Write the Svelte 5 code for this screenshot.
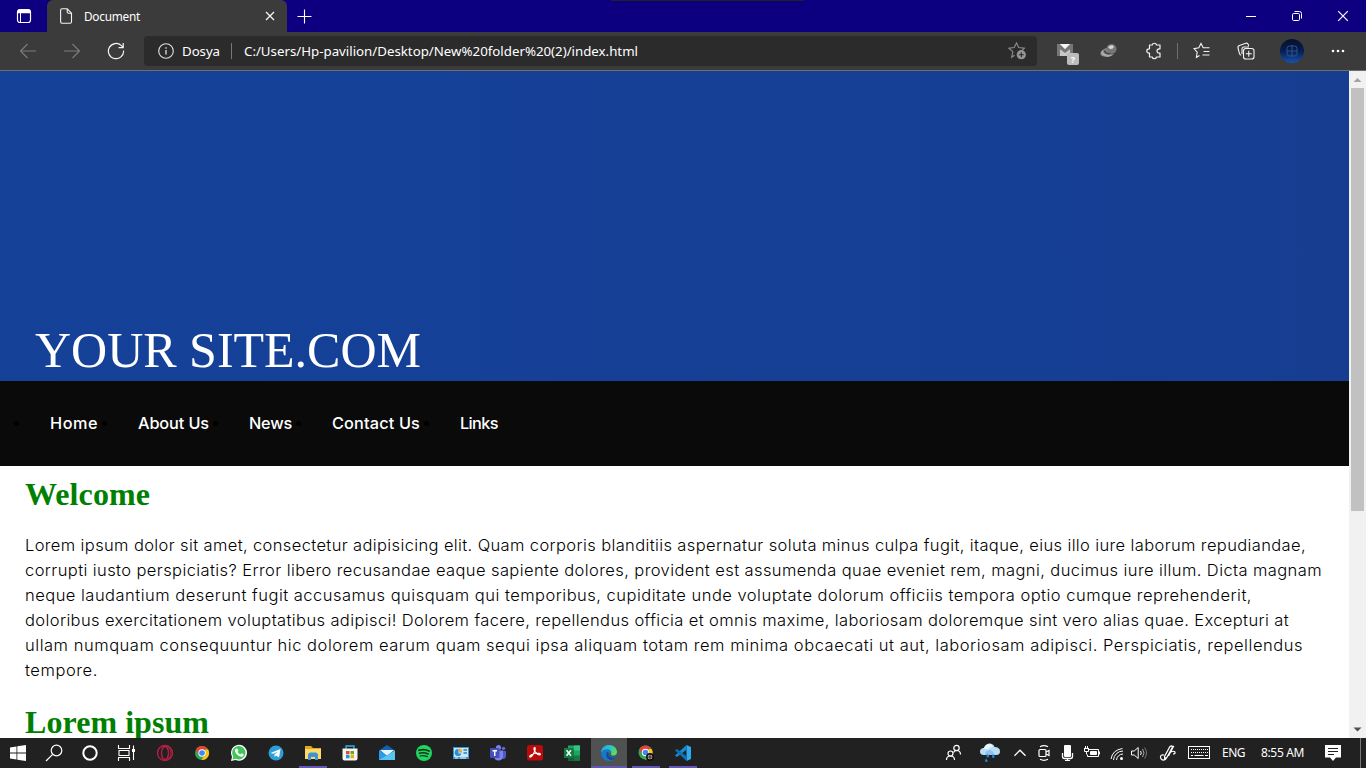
<script>
  // Spreads the letters of a single line so that it spans the given width.
  function fit(node, width) {
    node.style.letterSpacing = '0px';
    const range = document.createRange();
    range.selectNodeContents(node);
    const natural = range.getBoundingClientRect().width;
    const count = node.textContent.length;
    node.style.letterSpacing = (width - natural) / count + 'px';
    node.style.width = width + 'px';
  }

  const links = [
    ['Home', 48], ['About Us', 71], ['News', 43], ['Contact Us', 88], ['Links', 38]
  ];

  const lines = [
    ['Lorem ipsum dolor sit amet, consectetur adipisicing elit. Quam corporis blanditiis aspernatur soluta minus culpa fugit, itaque, eius illo iure laborum repudiandae,', 1281],
    ['corrupti iusto perspiciatis? Error libero recusandae eaque sapiente dolores, provident est assumenda quae eveniet rem, magni, ducimus iure illum. Dicta magnam', 1297],
    ['neque laudantium deserunt fugit accusamus quisquam qui temporibus, cupiditate unde voluptate dolorum officiis tempora optio cumque reprehenderit,', 1227],
    ['doloribus exercitationem voluptatibus adipisci! Dolorem facere, repellendus officia et omnis maxime, laboriosam doloremque sint vero alias quae. Excepturi at', 1264],
    ['ullam numquam consequuntur hic dolorem earum quam sequi ipsa aliquam totam rem minima obcaecati ut aut, laboriosam adipisci. Perspiciatis, repellendus', 1278],
    ['tempore.', 73]
  ];
</script>

<div class="screen">
  <header class="tabs">
    <svg class="menu" width="16" height="16" viewBox="0 0 16 16" fill="none" stroke="#fff"><rect x="1.5" y="1.5" width="13" height="13" rx="2.5" stroke-width="1.2"/><path d="M2 3.5h12" stroke-width="3.5"/><path d="M4.5 5v9" stroke-width="1"/></svg>
    <div class="tab">
      <svg width="14" height="16" viewBox="0 0 14 16" fill="none" stroke="#f4f4f4" stroke-width="1.1"><path d="M1.6 2.2Q1.6.8 3 .8h5.2l4.3 4.4v8.6q0 1.4-1.4 1.4H3q-1.4 0-1.4-1.4zM8.2.8v3q0 1.4 1.4 1.4h2.9"/></svg>
      <span class="title" use:fit={56}>Document</span>
      <svg class="x" width="10" height="10" viewBox="0 0 10 10" stroke="#f4f4f4" stroke-width="1.3"><path d="M1 1l8 8M9 1L1 9"/></svg>
    </div>
    <svg class="plus" width="15" height="15" viewBox="0 0 15 15" stroke="#fff" stroke-width="1.1"><path d="M.5 7.5h14M7.5.5v14"/></svg>
    <div class="edge"></div>
    <div class="win">
      <svg width="12" height="12" viewBox="0 0 12 12" stroke="#fff"><path d="M1 6.5h10"/></svg>
      <svg width="12" height="12" viewBox="0 0 12 12" fill="none" stroke="#fff"><rect x="1.5" y="3.5" width="7" height="7" rx="1.2"/><path d="M3.5 1.5h5q2 0 2 2v5"/></svg>
      <svg width="12" height="12" viewBox="0 0 12 12" stroke="#fff" stroke-width="1.2"><path d="M1.2 1.2l9.6 9.6M10.8 1.2l-9.6 9.6"/></svg>
    </div>
  </header>

  <div class="toolbar">
    <div class="travel">
      <svg width="18" height="16" viewBox="0 0 18 16" fill="none" stroke="#7c7c7c" stroke-width="1.1"><path d="M17 8H1.5M8.5 1l-7 7 7 7"/></svg>
      <svg width="18" height="16" viewBox="0 0 18 16" fill="none" stroke="#7c7c7c" stroke-width="1.1"><path d="M1 8h15.5M9.5 1l7 7-7 7"/></svg>
      <svg width="18" height="18" viewBox="0 0 18 18" fill="none" stroke="#f4f4f4" stroke-width="1.2"><path d="M16.6 8.6A7.6 7.6 0 1 1 14.4 3.7L16 5.3M16.2 1v4.6h-4.6"/></svg>
    </div>
    <div class="address">
      <svg width="16" height="16" viewBox="0 0 16 16" fill="none" stroke="#e2e2e2" stroke-width="1.1"><circle cx="8" cy="8" r="7.3"/><path d="M8 7v4.5M8 4.3v1.4" stroke-width="1.3"/></svg>
      <span class="scheme" use:fit={38}>Dosya</span>
      <i></i>
      <span class="url" use:fit={394}>C:/Users/Hp-pavilion/Desktop/New%20folder%20(2)/index.html</span>
      <svg class="fav" width="19" height="18" viewBox="0 0 19 18" fill="none" stroke="#8f8f8f" stroke-width="1.1"><path d="M6.5 13.2l-2.8 2 1.2-5.5L.8 6.2l5.4-.6L8.5 1l2.3 4.6 5.6.6-2 2"/><circle cx="13.3" cy="12.7" r="4.6" fill="#969696" stroke="none"/><path d="M10.8 12.7h5M13.3 10.2v5" stroke="#2b2b2b"/></svg>
    </div>
    <div class="tools">
      <svg class="mail" width="24" height="24" viewBox="0 0 24 24"><path d="M2 4h16v12H2z" fill="#777"/><path d="M5 4h10v12H5z" fill="#c8c8c8"/><path d="M2 4h3l5 5 5-5h3v3l-8 6-8-6z" fill="#777"/><path d="M5 4h10l-5 5z" fill="#f5f5f5"/><rect x="12" y="13" width="12" height="12" rx="2" fill="#bcbcbc"/><text x="18" y="22.5" text-anchor="middle" font-size="9" font-weight="700" fill="#fff">?</text></svg>
      <svg width="20" height="18" viewBox="0 0 20 18"><ellipse cx="8" cy="10" rx="7" ry="4" transform="rotate(-22 8 10)" fill="#858585"/><circle cx="12.500" cy="7" r="5" fill="#777"/><path d="M9 5a4 4 0 0 1 6-.5q-1 3-4 2.500z" fill="#d5d5d5"/><path d="M4 8q-1 6 11 4Q10 17 4 13.500 0 11 4 8z" fill="#aaa"/><path d="M5.500 8.500q1 4 6 3" stroke="#484848" stroke-width="1.500" fill="none"/></svg>
      <svg width="18" height="18" viewBox="0 0 18 18" fill="none" stroke="#f4f4f4" stroke-width="1.200" stroke-linejoin="round"><path d="M4.500 3h2.700a2.200 2.200 0 0 1 4.300 0h3.500v3.800h-.8a2.200 2.200 0 0 0 0 4.400h.8V15h-3.500a2.200 2.200 0 0 1-4.300 0H4.500v-3.800H4a2.200 2.200 0 0 1 0-4.400h.5z"/></svg>
      <i></i>
      <svg width="18" height="18" viewBox="0 0 18 18" fill="none" stroke="#f4f4f4" stroke-width="1.1"><path d="M6.500 13.500l-3.100 2 .8-5.300L1 6.600l4.800-.8L8 1.400l2.200 4.400h6.300M10.500 9.500h6M9.500 13h7"/></svg>
      <svg width="18" height="18" viewBox="0 0 18 18" fill="none" stroke="#f4f4f4" stroke-width="1.1"><rect x="6.500" y="6.500" width="10.500" height="10.500" rx="2.300"/><path d="M11.750 8.800v6M8.800 11.750h6M4.200 13.200Q2.800 13 2.400 11.400L1 6Q.6 4.100 2.400 3.600L8.800 1.200q1.800-.5 2.400 1.200l.5 1.600M5 12V7q0-2 2-2h5"/></svg>
      <svg width="24" height="24" viewBox="0 0 24 24"><defs><linearGradient id="av" x1="0" y1="0" x2="0" y2="1"><stop offset="0" stop-color="#071028"/><stop offset=".5" stop-color="#061d52"/><stop offset="1" stop-color="#1653b0"/></linearGradient></defs><circle cx="12" cy="12" r="12" fill="url(#av)"/><rect x="7" y="7" width="10" height="10" rx="2.500" fill="none" stroke="#345385"/><path d="M12 6v11M7 12h10" stroke="#345385"/></svg>
      <svg width="14" height="4" viewBox="0 0 14 4" fill="#fff"><circle cx="2" cy="2" r="1.300"/><circle cx="7" cy="2" r="1.300"/><circle cx="12" cy="2" r="1.300"/></svg>
    </div>
  </div>

  <div class="view">
    <main>
      <div class="banner"><span use:fit={386}>YOUR SITE.COM</span></div>
      <nav>
        {#each links as [label, width]}
          <a href="#top"><b></b><span use:fit={width}>{label}</span></a>
        {/each}
      </nav>
      <section>
        <h1><span use:fit={125}>Welcome</span></h1>
        <div class="para">
          {#each lines as [text, width]}
            <p use:fit={width}>{text}</p>
          {/each}
        </div>
        <h1 class="second"><span use:fit={184}>Lorem ipsum</span></h1>
      </section>
    </main>
    <aside>
      <svg width="17" height="17" viewBox="0 0 17 17"><path d="M4.500 11L8.500 7l4 4z" fill="#a3a3a3"/></svg>
      <div class="thumb"></div>
      <svg width="17" height="17" viewBox="0 0 17 17"><path d="M4.500 6.500h8l-4 4z" fill="#505050"/></svg>
    </aside>
  </div>

  <footer>
    <div class="system">
      <svg viewBox="0 0 20 20" fill="#fff"><path d="M2 4.400l6.500-.9v6H2zM9.300 3.300L18 2v7.500H9.300zM2 10.400h6.500v6.100L2 15.600zM9.300 10.400H18V18l-8.700-1.200z"/></svg>
      <svg viewBox="0 0 20 20" fill="none" stroke="#fff" stroke-width="1.200"><circle cx="12.500" cy="7.500" r="5.300"/><path d="M8.700 11.300L2 18"/></svg>
      <svg viewBox="0 0 20 20" fill="none" stroke="#fff" stroke-width="2"><circle cx="10" cy="10" r="6.700"/></svg>
      <svg viewBox="0 0 20 20" fill="none" stroke="#fff" stroke-width="1.100"><path d="M2.500 2v3.500h11V2M2.500 18v-3.500h11V18M3 7.500h10v5H3zM17.500 2.500v14.500"/><path d="M16 6h3v3h-3z" fill="#fff" stroke="none"/></svg>
    </div>
    <div class="apps">
      <div><svg viewBox="0 0 20 20" fill="none" stroke="#b51f42"><circle cx="10" cy="10" r="7.500" stroke-width="1.400"/><ellipse cx="10" cy="10" rx="3.500" ry="6.500" stroke-width="1.400"/><path d="M12 3.500q4 2 4 6.500t-4 6.500"/></svg></div>
      <div><svg viewBox="0 0 20 20"><circle cx="10" cy="10" r="7" fill="#31a753"/><path d="M3.900 6.500A7 7 0 0 1 16.100 6.500H10L6.800 12z" fill="#e94235"/><path d="M16.100 6.500A7 7 0 0 1 9.500 17l3.600-5.400L13.200 6.500z" fill="#fbc116"/><circle cx="10" cy="10" r="3.700" fill="#fff"/><circle cx="10" cy="10" r="2.800" fill="#4285f4"/></svg></div>
      <div><svg viewBox="0 0 20 20"><path d="M2 18l1-4.300A8 8 0 1 1 6.500 17z" fill="#fff"/><path d="M3.500 16.500l.8-3A6.700 6.700 0 1 1 7 15.800z" fill="#3fc55b"/><path d="M6.500 6q1.500-1.500 2.500.7l.4 1-.9 1.100q1 2 2.900 2.700l1.200-1.200 2.200 1.100q0 2.400-2.200 2.400Q8 13 6 8.500q-.4-1.500.5-2.500z" fill="#fff"/></svg></div>
      <div><svg viewBox="0 0 20 20"><circle cx="10" cy="10" r="7.500" fill="#2c9fd8"/><path d="M4.500 10L14.500 6l-1.500 8.500-3-2-1.500 1.500v-2.600l3.500-3-4.500 2.400z" fill="#fff"/></svg></div>
      <div class="open"><svg viewBox="0 0 20 20"><path d="M2 3h6l2 2h8v5H2z" fill="#e7a61d"/><path d="M2 6h16v10H2z" fill="#ffda6b"/><path d="M5 17v-6l2-1.500h6l2 1.500v6h-3v-3H8v3z" fill="#3e94d7"/></svg></div>
      <div><svg viewBox="0 0 20 20"><path d="M6 6V3h8v3" fill="none" stroke="#29b5eb" stroke-width="1.300"/><path d="M2.500 5.500h15v10q0 2-2 2h-11q-2 0-2-2z" fill="#f4f4f4"/><path d="M6 8h3.500v3.300H6z" fill="#e64a25"/><path d="M10.500 8H14v3.300h-3.500z" fill="#69a920"/><path d="M6 12h3.500v3.300H6z" fill="#1b96dc"/><path d="M10.500 12H14v3.300h-3.500z" fill="#f4ac0a"/></svg></div>
      <div><svg viewBox="0 0 20 20"><path d="M2 7.500L10 2l8 5.500V17H2z" fill="#1161b0"/><path d="M3 7h14l-7 6z" fill="#e8f5fb"/><path d="M2 7.500l8 5 8-5V17H2z" fill="#2b9be8"/><path d="M2 17L18 7.500V17z" fill="#59c4ef"/></svg></div>
      <div><svg viewBox="0 0 20 20" fill="none" stroke="#17351f" stroke-linecap="round"><circle cx="10" cy="10" r="8" fill="#1ed760" stroke="none"/><path d="M5 7.200q5.500-1.500 10 .8" stroke-width="1.900"/><path d="M5.500 10.200q4.500-1.300 8.700.8" stroke-width="1.600"/><path d="M6 13q3.800-1.100 7.300.7" stroke-width="1.300"/></svg></div>
      <div><svg viewBox="0 0 20 20"><path d="M2 4h16v12H2z" fill="#3c92cc"/><path d="M3 5h14v9H3z" fill="#c4e8fa"/><path d="M7.500 6a3.500 3.500 0 1 0 3 4.500h-3z" fill="#258fd0"/><path d="M8 5.500a3.500 3.500 0 0 1 3 4H8z" fill="#f2a820"/><path d="M12.500 7H16M12.500 10H16" stroke="#277dbc" stroke-width="1.300"/><path d="M4 15h3M9 15h6" stroke="#e8fbff"/></svg></div>
      <div><svg viewBox="0 0 20 20"><circle cx="15.500" cy="5.500" r="1.800" fill="#5b65ce"/><circle cx="10.500" cy="4.500" r="2.500" fill="#7b83eb"/><path d="M13 8h5v5q0 3-3 3h-2z" fill="#5059c9"/><path d="M6 7.500h9v6q-.5 4-4.500 4T6 13.500z" fill="#7b83eb"/><rect x="2" y="5" width="9.500" height="10" rx="1" fill="#464eb8"/><path d="M4.500 7.700H9M6.750 7.700v5.300" stroke="#fff" stroke-width="1.400"/></svg></div>
      <div><svg viewBox="0 0 20 20"><rect x="2" y="2" width="16" height="15.500" rx="2.500" fill="#b90b0b"/><path d="M5 14q-1-.5 1.500-2.200 3-1.800 7.700-1.500 2 .6.800 1.600-2.500.2-5-3.200-1.500-2.500-.9-3.800.8-.9 1.100.7.200 2.200-3 7Q5.700 14.500 5 14z" fill="none" stroke="#fff" stroke-width="1.200"/></svg></div>
      <div><svg viewBox="0 0 20 20"><path d="M6 2.500h12v15H6z" fill="#21a366"/><path d="M12 2.500h6v5h-6z" fill="#33c481"/><path d="M6 7.500h6v5H6zM12 12.500h6v5h-6z" fill="#107c41"/><path d="M6 12.500h6v5H6z" fill="#185c37"/><path d="M2 5h9.500v10H2z" fill="#107c41"/><path d="M4.500 7.200l4.500 5.500M9 7.200l-4.500 5.500" stroke="#fff" stroke-width="1.500"/></svg></div>
      <div class="open active"><svg viewBox="0 0 20 20"><defs><linearGradient id="eg" x1="0" y1="0" x2="1" y2=".5"><stop stop-color="#1da4de"/><stop offset=".6" stop-color="#31c6c0"/><stop offset="1" stop-color="#63db4c"/></linearGradient></defs><circle cx="10" cy="10" r="8" fill="#1578cb"/><path d="M2 9.500C2.500 4.500 6 2 10 2c5 0 8 3.500 8 7 0 3-3 4.500-6 3.500-1-.5-.5-1 .2-2C13 7.500 10 6 7.500 6.300 5 6.500 3 8 2 9.500z" fill="url(#eg)"/><path d="M8 9q-2.500 5 3 8 4 .5 6-3-4 1.500-6.500-.5Q8.700 12 9.500 9.500z" fill="#114b91"/><path d="M9.800 9.500q-1.300 3 1.900 4.200 3 1 5.800-.4l1.500-1.800-2.500.7q-3 1-4.500.1-.5-.4.300-1.500z" fill="#505252"/></svg></div>
      <div class="open"><svg viewBox="0 0 20 20"><circle cx="9.500" cy="9.500" r="7" fill="#31a753"/><path d="M3.400 6A7 7 0 0 1 15.600 6h-6l-3.200 5.500z" fill="#e94235"/><path d="M15.600 6A7 7 0 0 1 9 16.500l3.600-5.400V6z" fill="#fbc116"/><circle cx="9.500" cy="9.500" r="3.700" fill="#fff"/><circle cx="9.500" cy="9.500" r="2.800" fill="#4285f4"/><circle cx="14" cy="14" r="4" fill="#111"/><circle cx="14" cy="14" r="2.300" fill="#ddd" /><circle cx="14" cy="14" r="1.700" fill="#222"/><circle cx="14" cy="14" r=".8" fill="#e04b4b"/></svg></div>
      <div class="open"><svg viewBox="0 0 20 20"><path d="M13.500 2L18 4v12l-4.500 2z" fill="#2cacf2"/><path d="M13.500 2v4.700L4 14l-2-1.500z" fill="#168ad2"/><path d="M2 7.300L4 6l9.500 7.200V18z" fill="#0b73b7"/></svg></div>
    </div>
    <div class="tray">
      <svg viewBox="0 0 20 20" fill="none" stroke="#fff" stroke-width="1.200"><circle cx="12.500" cy="5" r="2.700"/><circle cx="6.500" cy="10.500" r="2.500"/><path d="M2.500 17q0-4 4-4t4 4M9.500 9.500q1-2 3-2 4 0 4 4"/></svg>
      <svg class="cloud" width="22" height="22" viewBox="0 0 22 22"><path d="M5 13Q1 13 1 9.500T5 6q1-4 5.500-4.500 4 0 5 3.500 5.500 0 5.500 4.500 0 3.500-4 3.500z" fill="#b9def8"/><path d="M4 7q3-1 5 1 1-3 5-3-2-4-5-3T5 6z" fill="#e9f6fe"/><path d="M10 8q4 0 5.500 5H6q0-4 4-5z" fill="#8fc2ed"/><path d="M8.500 12q-2 3 0 3.500t1.500-2zM14 12q-2 3.500 0 4t1.500-2zM7 16.500q-2 3 0 3.500t1.500-1.500z" fill="#1b88df"/></svg>
      <svg viewBox="0 0 20 20" fill="none" stroke="#fff" stroke-width="1.300"><path d="M4.500 12.700L10 7.200l5.500 5.500"/></svg>
      <svg viewBox="0 0 20 20" fill="none" stroke="#fff" stroke-width="1.200"><rect x="5" y="6.500" width="7" height="7" rx="1"/><path d="M12 9l3-1.500v5L12 11M6 3.700q4-2 8 0M6 16.300q4 2 8 0"/></svg>
      <svg viewBox="0 0 20 20"><rect x="6" y="2" width="7" height="12" rx="1" fill="#fff"/><path d="M4.500 10v3.500q0 2 2 2h6q2 0 2-2V10M9.500 15.500v2" stroke="#fff" stroke-width="1.300" fill="none"/><path d="M7 17.500h5" stroke="#fff"/></svg>
      <svg viewBox="0 0 20 20" fill="none" stroke="#fff"><path d="M6 6.500h9.500v7H4.500v-2M16.500 8.500v3M1 5.500h5M2.500 3v2.500M4.500 3v2.500M1.500 6v2.500h4V6M3.500 8.500v3"/><path d="M7.500 8.500h6v3h-6z" fill="#fff"/></svg>
      <svg viewBox="0 0 20 20" fill="none" stroke="#fff"><path d="M6.500 17A9.500 9.500 0 0 1 16 8M9.500 17A6.500 6.500 0 0 1 16 11M4 16Q5.500 7 15.500 5.500"/><circle cx="14.500" cy="15.500" r="1.500" fill="#fff" stroke="none"/></svg>
      <svg viewBox="0 0 20 20" fill="none" stroke="#fff"><path d="M2.500 8h2.700l4-3.500v11l-4-3.500H2.500z"/><path d="M11.500 8q1.500 2 0 4"/><path d="M13.500 6q3 4 0 8" stroke="#aaa"/><path d="M15.500 4.500q4 5.500 0 11" stroke="#777"/></svg>
      <svg viewBox="0 0 20 20" fill="none" stroke="#fff" stroke-width="1.200"><path d="M6 12q-4-.5-3.500 2.500.5 2.500 3 2.700 2.200-.2 3.500-3L14.500 4q-.5-2-2.500-.5L6.500 13.500l.2 2L9 14.200M13.500 3l2 .5L10.500 13M13 9q2.500-1.500 4 0 .5 2-2 2"/></svg>
      <svg width="24" height="20" viewBox="0 0 24 20" fill="none" stroke="#fff"><rect x="1.500" y="3.500" width="21" height="12"/><path d="M4 6.500h17M4 9.500h17" stroke-dasharray="1 1"/><path d="M4 12.500h2M7.500 12.500h9M18 12.500h3"/></svg>
      <span use:fit={23}>ENG</span>
      <span use:fit={43}>8:55 AM</span>
      <svg viewBox="0 0 20 20"><path d="M2 2h16v12.500h-5L10 18l-3-3.500H2z" fill="#fff"/><path d="M5 5.500h10M5 8.500h10M5 11.500h6" stroke="#222"/></svg>
      <i></i>
    </div>
  </footer>
</div>

<style>
  :global(body) { margin: 0; overflow: hidden; background: #fff; }
  * { box-sizing: border-box; }
  svg { display: block; flex: none; }
  span, p { white-space: nowrap; }
  .screen { width: 1366px; height: 768px; display: flex; flex-direction: column; overflow: hidden; font-family: "Noto Sans", "Open Sans", sans-serif; }

  .tabs { height: 32px; flex: none; display: flex; align-items: center; background: #0d0080; color: #fff; }
  .menu { margin: 0 15px 0 16px; }
  .tab { width: 240px; height: 32px; display: flex; align-items: center; padding: 0 12px; background: #3b3b3b; border-radius: 6px 6px 0 0; }
  .title { margin-left: 11px; font-size: 11.8px; line-height: 16px; }
  .x { margin-left: auto; }
  .plus { margin-left: 10px; }
  .edge { width: 193px; height: 1px; margin-left: 299px; align-self: flex-start; background: #202020; }
  .win { display: flex; gap: 34px; margin-left: auto; padding-right: 17px; }

  .toolbar { height: 39px; flex: none; display: flex; align-items: center; background: #3b3b3b; border-bottom: 1px solid #6e6e6e; color: #fff; }
  .travel { width: 144px; display: flex; align-items: center; gap: 26px; padding-left: 19px; }
  .address { width: 893px; height: 30px; display: flex; align-items: center; padding: 0 10px 0 14px; border-radius: 4px; background: #2b2b2b; font-size: 13.3px; line-height: 18px; }
  .scheme { margin-left: 8px; }
  .address i { width: 1px; height: 16px; margin: 0 12px 0 11px; background: #777; }
  .fav { margin-left: auto; }
  .tools { flex: 1; height: 30px; display: grid; grid-template-columns: 48px 36px 54px 0 42px 46px 46px 46px; align-items: center; justify-items: center; padding-left: 6px; }
  .tools i { width: 1px; height: 16px; margin-left: -8px; background: #707070; }
  .mail { overflow: visible; margin-top: 1px; }

  .view { flex: 1; min-height: 0; display: flex; overflow: hidden; }
  main { width: 1349px; overflow: hidden; background: #fff; }
  .banner { height: 310px; display: flex; align-items: flex-end; padding: 0 0 3px 35px; background: linear-gradient(90deg, #154198, #153f95 75%, #163d90); color: #fff; font: 50px/56px "Liberation Serif", serif; }
  nav { height: 85px; display: flex; align-items: center; padding: 0 0 2px 10px; background: #0a0a0a; font: 500 16.3px/24px Inter, sans-serif; }
  nav a { display: flex; align-items: center; color: #fff; text-decoration: none; }
  nav b { width: 5px; height: 5px; margin: 2px 31px 0 4px; border-radius: 50%; background: #000; }
  section { padding: 10px 0 0 25px; }
  h1 { margin: 0; color: #008000; font: bold 32px/36px "Liberation Serif", serif; }
  h1 span, .banner span { display: block; }
  .para { margin-top: 21px; font: 300 16.5px/25px Inter, sans-serif; color: #000; }
  p { margin: 0; }
  .second { margin-top: 21px; }
  aside { width: 17px; display: flex; flex-direction: column; background: #f1f1f1; }
  .thumb { width: 13px; height: 423px; margin: 0 auto auto; background: #c1c1c1; }

  footer { height: 30px; flex: none; display: flex; align-items: center; background: #212121; color: #fff; }
  footer svg:not([width]) { width: 20px; height: 20px; }
  .system { width: 147px; display: grid; grid-template-columns: repeat(4, 36px); justify-items: center; }
  .apps { height: 30px; display: flex; gap: 1px; }
  .apps div { width: 36px; height: 30px; display: flex; align-items: center; justify-content: center; }
  .open { background: linear-gradient(#6257b8, #6257b8) center bottom / 28px 2px no-repeat; }
  .active { background: linear-gradient(#6257b8, #6257b8) center bottom / 36px 2px no-repeat #505252; }
  .tray { height: 30px; margin-left: auto; display: grid; grid-template-columns: 36px 36px 24px 24px 24px 25px 23px 22px 36px 26px 43px 55px 46px 5px; align-items: center; justify-items: center; padding-right: 5px; font-size: 12px; }
  .tray span { line-height: 16px; }
  .tray i { width: 1px; height: 30px; justify-self: end; background: #777; }
</style>
